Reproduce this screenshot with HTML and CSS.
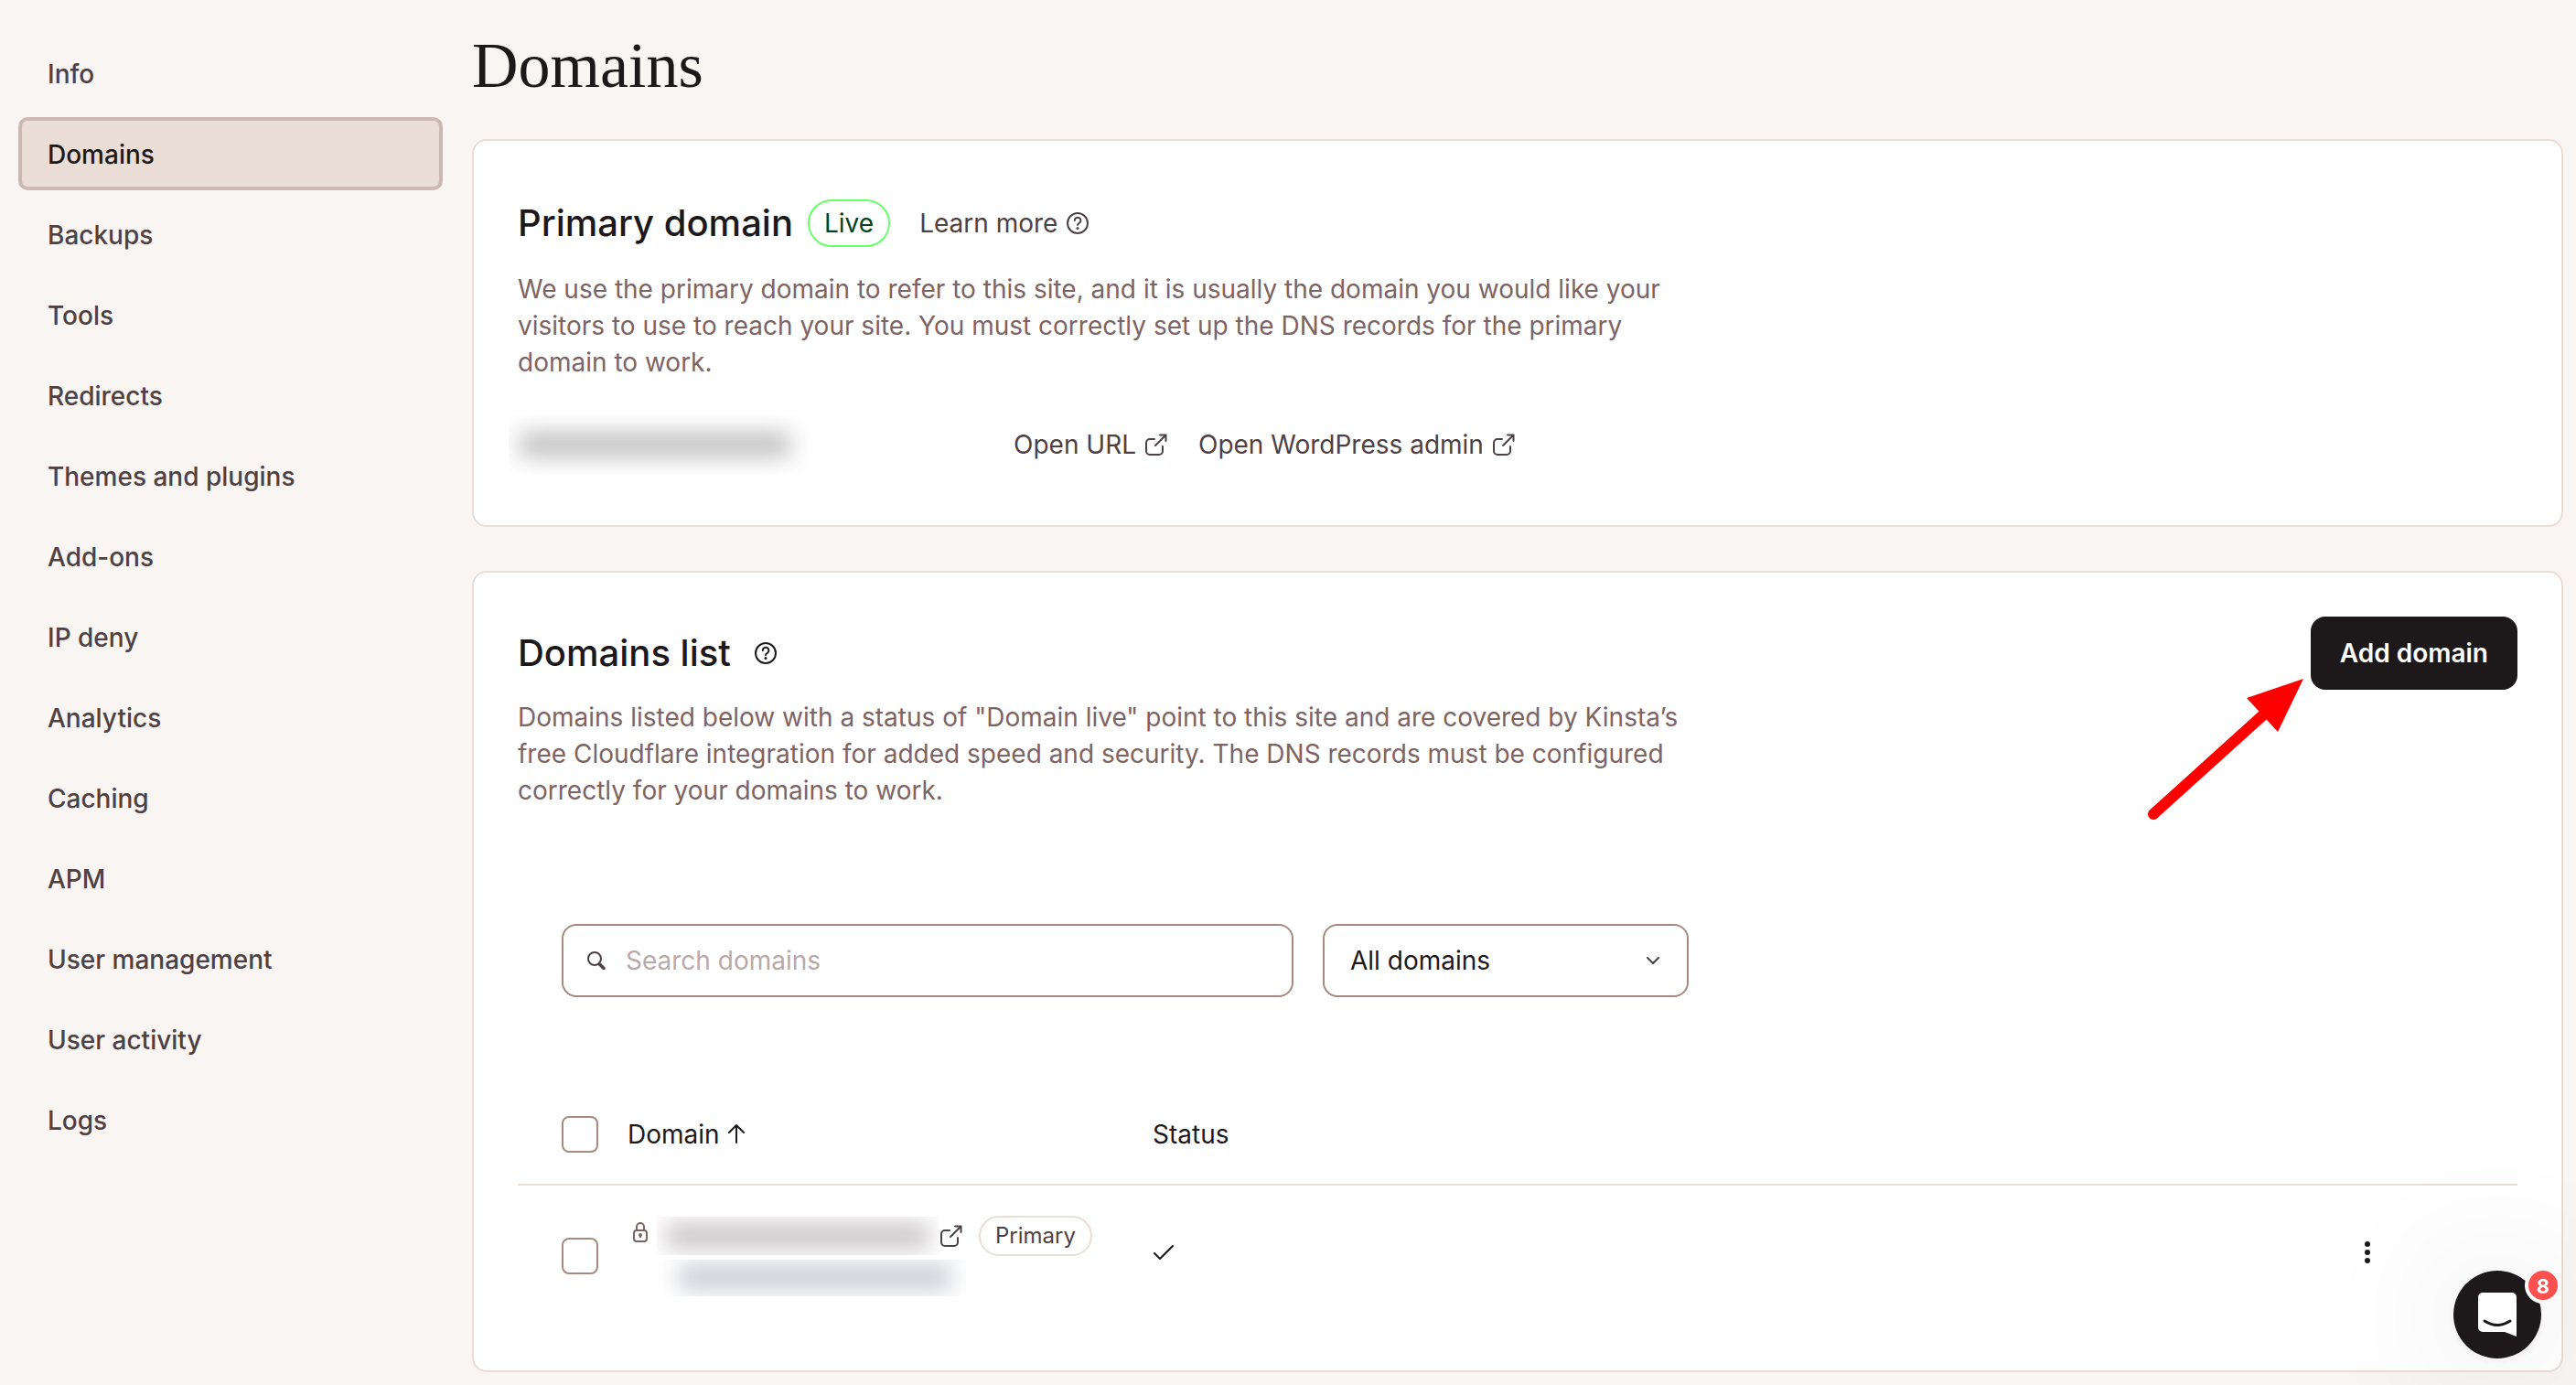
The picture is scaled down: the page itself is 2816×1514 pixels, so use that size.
FILE: index.html
```html
<!DOCTYPE html>
<html lang="en">
  <head>
    <meta charset="UTF-8" />
    <meta name="viewport" content="width=device-width, initial-scale=1.0" />
    <title>Domains</title>
    <link rel="stylesheet" href="styles.css">
  </head>
  <body>
    <!-- Shared icons -->
    <svg class="sprite" aria-hidden="true">
      <symbol id="icon-help" viewBox="0 0 24 24">
        <circle cx="12" cy="12" r="11" fill="none" stroke="currentColor" stroke-width="2" />
        <path d="M8.800 9a3.300 3.300 0 1 1 5 2.800c-1.200.7-1.800 1.100-1.800 2.200" fill="none" stroke="currentColor" stroke-width="2" stroke-linecap="round" />
        <circle cx="12" cy="17.500" r="1.500" fill="currentColor" />
      </symbol>
      <symbol id="icon-external" viewBox="0 0 24 24">
        <path d="M10 6H5a4 4 0 0 0-4 4V19a4 4 0 0 0 4 4h10a4 4 0 0 0 4-4v-5M16 1.500H22.500V8M22.500 1.500L11 13" fill="none" stroke="currentColor" stroke-width="2" stroke-linecap="round" />
      </symbol>
    </svg>

    <div class="page">
      <!-- Sidebar -->
      <nav class="sidebar">
        <a href="#">Info</a>
        <a href="#" class="active">Domains</a>
        <a href="#">Backups</a>
        <a href="#">Tools</a>
        <a href="#">Redirects</a>
        <a href="#">Themes and plugins</a>
        <a href="#">Add-ons</a>
        <a href="#">IP deny</a>
        <a href="#">Analytics</a>
        <a href="#">Caching</a>
        <a href="#">APM</a>
        <a href="#">User management</a>
        <a href="#">User activity</a>
        <a href="#">Logs</a>
      </nav>

      <main class="content">
        <h1>Domains</h1>

        <!-- Primary domain -->
        <section class="card">
          <div class="card-header primary-header">
            <h2>Primary domain</h2>
            <span class="badge live">Live</span>
            <a href="#" class="link">Learn more <svg class="icon"><use href="#icon-help" /></svg></a>
          </div>
          <p class="description">We use the primary domain to refer to this site, and it is usually the domain you would like your visitors to use to reach your site. You must correctly set up the DNS records for the primary domain to work.</p>
          <div class="primary-row">
            <div class="primary-name"><span class="redacted gray"></span></div>
            <a href="#" class="link">Open URL <svg class="icon"><use href="#icon-external" /></svg></a>
            <a href="#" class="link">Open WordPress admin <svg class="icon"><use href="#icon-external" /></svg></a>
          </div>
        </section>

        <!-- Domains list -->
        <section class="card">
          <div class="card-header">
            <h2>Domains list</h2>
            <button class="help" aria-label="Help"><svg class="icon"><use href="#icon-help" /></svg></button>
            <div class="add">
              <button class="add-button">Add domain</button>
              <svg class="pointer" viewBox="0 0 172 156" aria-hidden="true">
                <path d="M8 148L132 36" stroke="#f00" stroke-width="12" stroke-linecap="round" />
                <path d="M172 0L110 21L144 58Z" fill="#f00" />
              </svg>
            </div>
          </div>
          <p class="description">Domains listed below with a status of "Domain live" point to this site and are covered by Kinsta’s free Cloudflare integration for added speed and security. The DNS records must be configured correctly for your domains to work.</p>

          <div class="filters">
            <label class="field search">
              <svg viewBox="0 0 20 20" aria-hidden="true">
                <circle cx="8" cy="8" r="7" fill="none" stroke="currentColor" stroke-width="2" />
                <path d="M13.500 14L18 18.500" stroke="currentColor" stroke-width="3.500" stroke-linecap="round" />
              </svg>
              <input type="text" placeholder="Search domains" aria-label="Search domains" />
            </label>
            <label class="field filter">
              <select aria-label="Filter domains">
                <option>All domains</option>
              </select>
              <svg viewBox="0 0 14 8" aria-hidden="true">
                <path d="M1 1l6 6 6-6" fill="none" stroke="currentColor" stroke-width="2" stroke-linecap="round" stroke-linejoin="round" />
              </svg>
            </label>
          </div>

          <table class="domains">
            <thead>
              <tr>
                <th class="check"><input type="checkbox" aria-label="Select all domains" /></th>
                <th class="domain">Domain <svg class="sort" viewBox="0 0 18 22" aria-hidden="true"><path d="M9 21V2M1 10l8-8 8 8" fill="none" stroke="currentColor" stroke-width="2" stroke-linecap="round" stroke-linejoin="round" /></svg></th>
                <th>Status</th>
                <th class="actions"></th>
              </tr>
            </thead>
            <tbody>
              <tr>
                <td class="check"><input type="checkbox" aria-label="Select domain" /></td>
                <td>
                  <div class="domain-name">
                    <svg class="lock" viewBox="0 0 16 22" aria-hidden="true">
                      <rect x="1" y="9" width="14" height="12" rx="3" fill="none" stroke="currentColor" stroke-width="2" />
                      <path d="M4 9V5a4 4 0 0 1 8 0v4M8 14v3" fill="none" stroke="currentColor" stroke-width="2" />
                      <circle cx="8" cy="14" r="2" fill="currentColor" />
                    </svg>
                    <span class="redacted warm"></span>
                    <a href="#" class="link" aria-label="Open domain"><svg class="icon"><use href="#icon-external" /></svg></a>
                    <span class="badge primary">Primary</span>
                  </div>
                  <span class="redacted cool"></span>
                </td>
                <td class="raised">
                  <svg class="tick" viewBox="0 0 24 18" aria-label="Live"><path d="M2 10l6 6L22 2" fill="none" stroke="currentColor" stroke-width="2" stroke-linecap="round" stroke-linejoin="round" /></svg>
                </td>
                <td class="raised">
                  <button class="more" aria-label="More actions">
                    <svg viewBox="0 0 6 24"><circle cx="3" cy="3" r="3" /><circle cx="3" cy="12" r="3" /><circle cx="3" cy="21" r="3" /></svg>
                  </button>
                </td>
              </tr>
            </tbody>
          </table>
        </section>
      </main>
    </div>

    <!-- Chat launcher -->
    <button class="chat" aria-label="Open chat">
      <svg viewBox="0 0 96 96" aria-hidden="true">
        <mask id="cutout">
          <rect width="96" height="96" fill="#fff" />
          <circle cx="98" cy="16" r="20" fill="#000" />
        </mask>
        <circle cx="48" cy="48" r="48" fill="#1d191a" mask="url(#cutout)" />
        <path d="M32 24h32a5 5 0 0 1 5 5v43l-13-5H32a5 5 0 0 1-5-5V29a5 5 0 0 1 5-5z" fill="#fff" />
        <path d="M34 55q14 9 28 0" fill="none" stroke="#1d191a" stroke-width="3" stroke-linecap="round" />
      </svg>
      <span class="count">8</span>
    </button>
  </body>
</html>
```
FILE: styles.css
```css
* {
  box-sizing: border-box;
}
body {
  margin: 0;
  font-family: Inter, "Liberation Sans", sans-serif;
  font-size: 28px;
  line-height: 40px;
  background-color: #f9f5f2;
  color: #1d191a;
}
button,
input,
select {
  font: inherit;
  color: inherit;
  border: none;
  background: none;
  padding: 0;
  margin: 0;
}
button {
  cursor: pointer;
}
a {
  color: #4d4144;
  text-decoration: none;
}
svg {
  display: block;
  flex-shrink: 0;
}
.sprite {
  position: absolute;
  width: 0;
  height: 0;
}
.icon {
  width: 24px;
  height: 24px;
}
.page {
  display: flex;
  min-height: 100vh;
}

/* Sidebar */
.sidebar {
  display: flex;
  flex-direction: column;
  gap: 8px;
  flex: 0 0 516px;
  padding: 40px 32px 40px 20px;
}
.sidebar a {
  padding: 17px 28px 15px;
  border: 4px solid transparent;
  border-radius: 10px;
  font-weight: 500;
}
.sidebar a.active {
  background-color: #e9ddd5;
  border-color: #ccb9b3;
  color: #1d191a;
}

/* Content */
.content {
  flex: 1;
  min-width: 0;
  padding: 32px 14px 14px 0;
}
h1 {
  margin: 0 0 40px;
  font-family: "Liberation Serif", serif;
  font-size: 70px;
  line-height: 80px;
  font-weight: 400;
}
h2 {
  margin: 0;
  font-size: 40px;
  line-height: 48px;
  font-weight: 500;
}
.card {
  background-color: #fff;
  border: 2px solid #e9ddd5;
  border-radius: 16px;
  padding: 48px;
}
.card + .card {
  margin-top: 48px;
}
.card-header {
  display: flex;
  align-items: center;
  margin-bottom: 10px;
}
.primary-header {
  min-height: 84px;
}
.description {
  margin: 0;
  max-width: 1280px;
  color: #7d6464;
}
.link {
  display: flex;
  align-items: center;
  gap: 10px;
}
.badge {
  border: 2px solid #e9ddd5;
  border-radius: 26px;
}
.badge.live {
  margin: 0 32px 0 16px;
  padding: 4px 16px;
  border-color: #66ff66;
  line-height: 40px;
  color: #00451f;
}
.badge.primary {
  margin-left: 18px;
  padding: 0 16px;
  font-size: 24px;
  color: #4d4144;
}
.primary-row {
  display: flex;
  align-items: center;
  gap: 34px;
  height: 80px;
  margin-top: 30px;
}
.primary-name {
  width: 508px;
}

/* Hidden domain names */
.redacted {
  display: block;
  overflow: hidden;
}
.redacted::before {
  content: "";
  display: block;
  height: 100%;
}
.redacted.gray {
  width: 328px;
  height: 64px;
  margin-left: -10px;
  padding: 18px 20px 18px 12px;
}
.redacted.gray::before {
  background-color: #c2c2c2;
  filter: blur(12px);
}
.redacted.warm {
  width: 308px;
  height: 42px;
  padding: 6px 10px;
}
.redacted.warm::before {
  background-color: #cdc8ca;
  filter: blur(12px);
}
.redacted.cool {
  width: 340px;
  height: 40px;
  margin: 4px 0 0 30px;
  padding: 4px 16px 6px 26px;
}
.redacted.cool::before {
  background-color: #cdd0d7;
  filter: blur(12px);
}

/* Domains list */
.help {
  margin-left: 26px;
}
.add {
  position: relative;
  margin-left: auto;
}
.add-button {
  display: block;
  height: 80px;
  padding: 0 32px;
  border-radius: 16px;
  background-color: #1d191a;
  color: #fff;
  font-weight: 600;
}
.pointer {
  position: absolute;
  top: 68px;
  right: 234px;
  width: 172px;
  height: 156px;
}
.filters {
  display: flex;
  gap: 32px;
  margin: 126px 48px 96px;
}
.field {
  display: flex;
  align-items: center;
  height: 80px;
  border: 2px solid #a6897f;
  border-radius: 16px;
  color: #4d4144;
}
.search {
  flex: 0 1 800px;
  gap: 22px;
  padding: 0 26px;
}
.search svg {
  width: 20px;
  height: 20px;
}
.search input {
  flex: 1;
  min-width: 0;
  outline: none;
}
.search input::placeholder {
  color: #b8aaaa;
  opacity: 1;
}
.filter {
  flex: 0 1 400px;
  padding: 0 30px 0 28px;
}
.filter select {
  flex: 1;
  appearance: none;
  color: #1d191a;
  outline: none;
}
.filter svg {
  width: 14px;
  height: 8px;
}
.domains {
  width: 100%;
  table-layout: fixed;
  border-collapse: separate;
  border-spacing: 0;
}
.domains th {
  height: 110px;
  padding: 0;
  border-bottom: 2px solid #e9ddd5;
  text-align: left;
  font-weight: 400;
}
.domains td {
  height: 154px;
  padding: 0;
}
.domains td.raised {
  padding-bottom: 8px;
}
.domains .check {
  width: 120px;
  padding-left: 48px;
}
.domains .domain {
  width: 574px;
}
.domains .actions {
  width: 204px;
}
.domains input {
  display: block;
  appearance: none;
  width: 40px;
  height: 40px;
  border: 2px solid #a6897f;
  border-radius: 8px;
}
.sort {
  display: inline-block;
  width: 18px;
  height: 22px;
  margin-left: 2px;
}
.domain-name {
  display: flex;
  align-items: center;
}
.lock {
  width: 16px;
  height: 22px;
  margin: 0 10px 8px 6px;
  color: #7d6464;
}
.domain-name .link {
  margin-left: 2px;
}
.tick {
  width: 24px;
  height: 18px;
}
.more {
  display: flex;
  align-items: center;
  justify-content: center;
  width: 80px;
  height: 80px;
}
.more svg {
  width: 6px;
  height: 24px;
  fill: #1d191a;
}

/* Chat launcher */
.chat {
  position: fixed;
  right: 38px;
  bottom: 29px;
  width: 96px;
  height: 96px;
  border-radius: 50%;
  box-shadow: 0 2px 12px rgba(0, 0, 0, 0.06), 0 4px 160px rgba(0, 0, 0, 0.16);
}
.count {
  position: absolute;
  top: 0;
  right: -18px;
  width: 32px;
  height: 32px;
  border-radius: 50%;
  background-color: #ff4f4f;
  color: #fff;
  font-size: 22px;
  line-height: 34px;
  font-weight: 700;
}
```
